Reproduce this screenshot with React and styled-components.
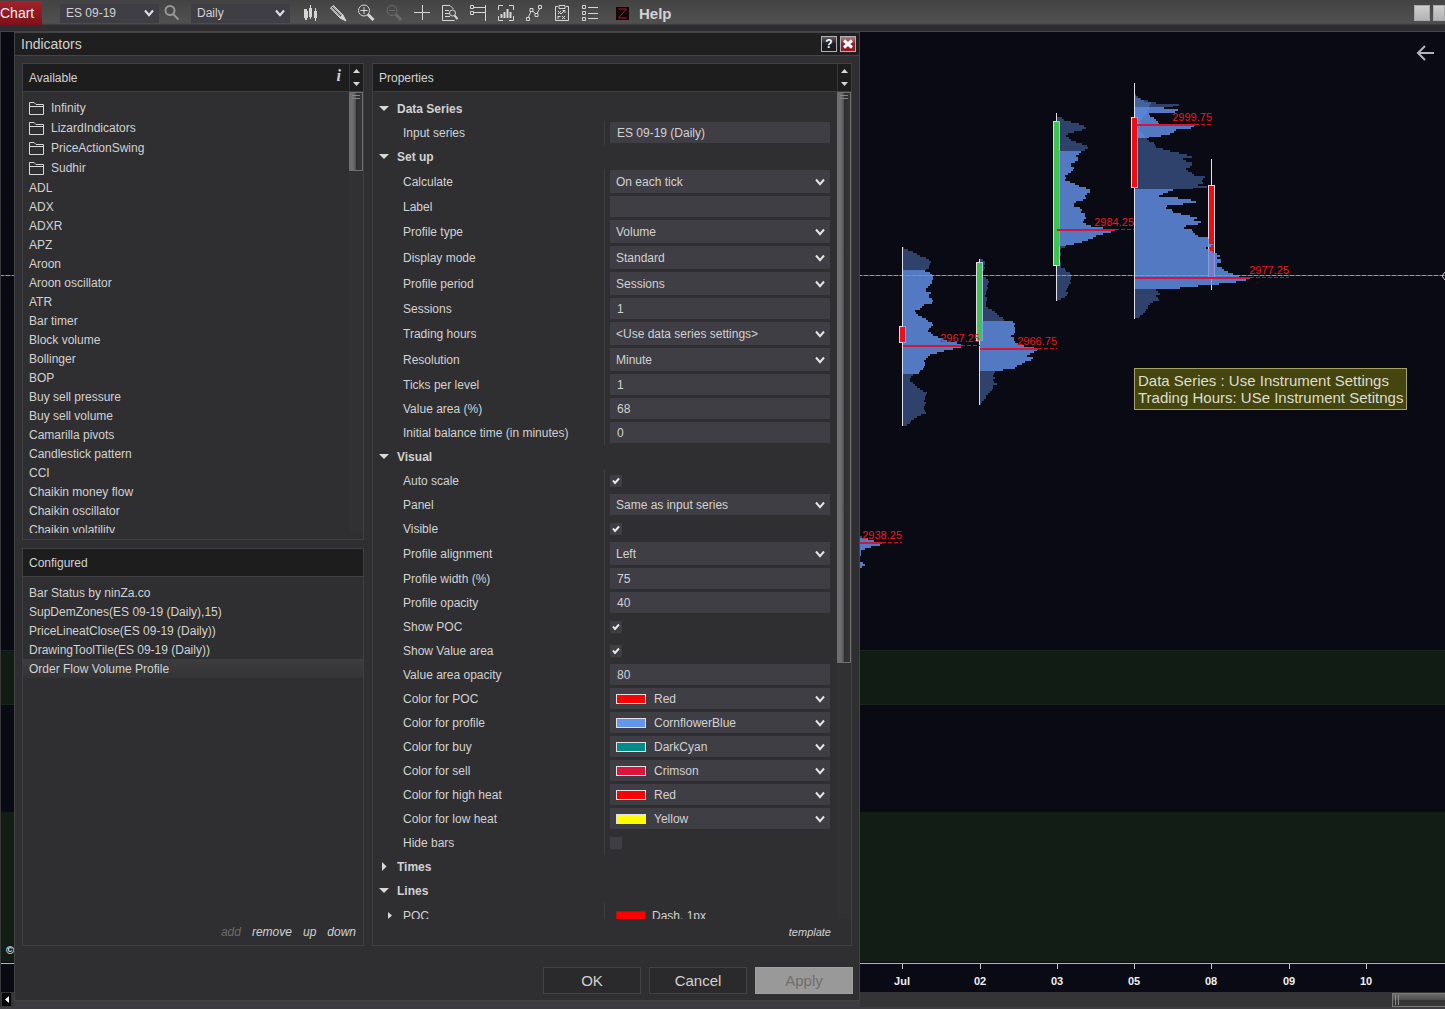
import React, { useId } from 'react'
import styled, { createGlobalStyle } from 'styled-components'

const indicators = [
  'ADL',
  'ADX',
  'ADXR',
  'APZ',
  'Aroon',
  'Aroon oscillator',
  'ATR',
  'Bar timer',
  'Block volume',
  'Bollinger',
  'BOP',
  'Buy sell pressure',
  'Buy sell volume',
  'Camarilla pivots',
  'Candlestick pattern',
  'CCI',
  'Chaikin money flow',
  'Chaikin oscillator',
  'Chaikin volatility',
]

const folders = ['Infinity', 'LizardIndicators', 'PriceActionSwing', 'Sudhir']

const configured = [
  'Bar Status by ninZa.co',
  'SupDemZones(ES 09-19 (Daily),15)',
  'PriceLineatClose(ES 09-19 (Daily))',
  'DrawingToolTile(ES 09-19 (Daily))',
  'Order Flow Volume Profile',
]

const groups = [
  {
    title: 'Data Series',
    open: true,
    rows: [{ type: 'text', label: 'Input series', value: 'ES 09-19 (Daily)' }],
  },
  {
    title: 'Set up',
    open: true,
    rows: [
      { type: 'select', label: 'Calculate', value: 'On each tick' },
      { type: 'text', label: 'Label', value: '' },
      { type: 'select', label: 'Profile type', value: 'Volume' },
      { type: 'select', label: 'Display mode', value: 'Standard' },
      { type: 'select', label: 'Profile period', value: 'Sessions' },
      { type: 'text', label: 'Sessions', value: '1' },
      {
        type: 'select',
        label: 'Trading hours',
        value: '<Use data series settings>',
      },
      { type: 'select', label: 'Resolution', value: 'Minute' },
      { type: 'text', label: 'Ticks per level', value: '1' },
      { type: 'text', label: 'Value area (%)', value: '68' },
      { type: 'text', label: 'Initial balance time (in minutes)', value: '0' },
    ],
  },
  {
    title: 'Visual',
    open: true,
    rows: [
      { type: 'check', label: 'Auto scale', value: true },
      { type: 'compact', label: 'Panel', value: 'Same as input series' },
      { type: 'check', label: 'Visible', value: true },
      { type: 'select', label: 'Profile alignment', value: 'Left' },
      { type: 'text', label: 'Profile width (%)', value: '75' },
      { type: 'text', label: 'Profile opacity', value: '40' },
      { type: 'check', label: 'Show POC', value: true },
      { type: 'check', label: 'Show Value area', value: true },
      { type: 'text', label: 'Value area opacity', value: '80' },
      { type: 'color', label: 'Color for POC', value: 'Red' },
      { type: 'color', label: 'Color for profile', value: 'CornflowerBlue' },
      { type: 'color', label: 'Color for buy', value: 'DarkCyan' },
      { type: 'color', label: 'Color for sell', value: 'Crimson' },
      { type: 'color', label: 'Color for high heat', value: 'Red' },
      { type: 'color', label: 'Color for low heat', value: 'Yellow' },
      { type: 'check', label: 'Hide bars', value: false },
    ],
  },
  { title: 'Times', open: false, rows: [] },
  {
    title: 'Lines',
    open: true,
    rows: [{ type: 'line', label: 'POC', value: 'Dash, 1px' }],
  },
]

// [y, width] anchors of each volume profile, va = value area from / to
const profiles = [
  {
    x: 825,
    va: [538, 575],
    points: [[536, 37], [538, 43], [540, 50], [542, 56], [544, 54], [546, 46], [548, 40], [551, 35], [560, 35], [564, 39], [567, 36], [570, 34]],
  },
  {
    x: 903,
    va: [270, 374],
    points: [[247, 0], [252, 12], [257, 22], [261, 28], [265, 27], [269, 22], [271, 23], [273, 28], [277, 31], [281, 29], [285, 25], [289, 23], [292, 27], [295, 25], [298, 29], [300, 31], [302, 28], [304, 20], [308, 17], [311, 11], [314, 14], [317, 22], [320, 26], [324, 29], [328, 26], [333, 27], [336, 35], [340, 45], [342, 53], [344, 57], [346, 58], [348, 50], [351, 38], [353, 27], [357, 24], [361, 21], [365, 21], [369, 20], [372, 15], [374, 9], [379, 7], [384, 11], [388, 17], [391, 23], [396, 22], [402, 22], [408, 21], [411, 24], [414, 17], [418, 11], [422, 6], [426, 0]],
  },
  {
    x: 980,
    va: [321, 371],
    points: [[259, 2], [261, 5], [264, 6], [268, 3], [275, 3], [280, 9], [284, 8], [290, 6], [300, 6], [307, 7], [310, 13], [314, 19], [318, 23], [320, 23], [321, 33], [323, 35], [328, 34], [332, 35], [335, 32], [340, 34], [343, 38], [346, 48], [348, 57], [350, 56], [352, 52], [355, 48], [358, 54], [360, 47], [363, 42], [367, 34], [369, 22], [371, 15], [376, 14], [380, 12], [383, 17], [386, 13], [389, 11], [392, 9], [397, 5], [401, 2], [405, 0]],
  },
  {
    x: 1057,
    va: [151, 246],
    points: [[117, 4], [120, 8], [122, 19], [125, 28], [128, 28], [131, 17], [134, 9], [138, 11], [142, 22], [145, 31], [148, 29], [151, 24], [155, 20], [160, 20], [163, 14], [168, 16], [172, 13], [176, 8], [179, 7], [183, 18], [187, 28], [190, 34], [194, 29], [198, 28], [201, 19], [204, 16], [208, 24], [211, 24], [214, 30], [218, 27], [222, 26], [225, 35], [228, 50], [230, 58], [232, 50], [235, 40], [238, 33], [242, 22], [244, 12], [246, 8], [248, 4], [253, 3], [260, 3], [266, 4], [268, 8], [272, 12], [277, 15], [282, 13], [287, 10], [292, 10], [296, 8], [298, 4], [301, 0]],
  },
  {
    x: 1135,
    va: [107, 139],
    points: [[94, 0], [98, 6], [100, 14], [102, 20], [104, 43], [106, 38], [107, 28], [109, 42], [111, 40], [113, 14], [116, 17], [120, 22], [123, 24], [125, 60], [127, 55], [129, 40], [132, 38], [134, 33], [136, 20], [138, 5]],
  },
  {
    x: 1135,
    va: [189, 289],
    points: [[96, 1], [102, 15], [108, 14], [116, 8], [124, 4], [132, 6], [138, 12], [142, 18], [146, 21], [149, 32], [152, 43], [155, 55], [157, 59], [158, 48], [162, 56], [165, 57], [168, 51], [171, 55], [175, 60], [176, 70], [179, 68], [182, 67], [184, 62], [186, 72], [188, 58], [189, 37], [193, 28], [195, 25], [197, 42], [199, 55], [201, 61], [203, 48], [205, 33], [207, 30], [209, 36], [211, 38], [214, 50], [216, 62], [219, 58], [221, 66], [223, 63], [225, 52], [227, 48], [229, 56], [232, 59], [235, 64], [237, 72], [241, 74], [244, 80], [247, 70], [250, 76], [253, 82], [254, 89], [257, 81], [260, 88], [263, 82], [266, 84], [270, 90], [273, 98], [276, 108], [278, 113], [280, 108], [282, 94], [284, 75], [286, 53], [288, 35], [289, 20], [293, 25], [296, 21], [299, 23], [302, 16], [305, 14], [308, 11], [312, 9], [316, 5], [318, 0]],
  },
]

const wicks = [
  { x: 902, from: 247, to: 426 },
  { x: 979, from: 259, to: 405 },
  { x: 1056, from: 113, to: 301 },
  { x: 1134, from: 83, to: 319 },
  { x: 1211, from: 159, to: 290 },
]

const candles = [
  { x: 899, from: 326, to: 342, color: '#e81123' },
  { x: 976, from: 262, to: 340, color: '#3fc350' },
  { x: 1053, from: 121, to: 265, color: '#3fc350' },
  { x: 1131, from: 117, to: 187, color: '#f00c12' },
  { x: 1208, from: 185, to: 277, color: '#f00c12' },
]

const pocs = [
  { value: '2938.25', from: 825, solid: 882, to: 902, y: 542, labelY: 539 },
  { value: '2967.25', from: 903, solid: 961, to: 980, y: 345, labelY: 342 },
  { value: '2966.75', from: 980, solid: 1038, to: 1057, y: 348, labelY: 345 },
  { value: '2984.25', from: 1057, solid: 1115, to: 1134, y: 229, labelY: 226 },
  { value: '2999.75', from: 1135, solid: 1195, to: 1212, y: 124, labelY: 121 },
  { value: '2977.25', from: 1135, solid: 1250, to: 1289, y: 277, labelY: 274 },
]

const days = [
  { x: 902, label: 'Jul' },
  { x: 980, label: '02' },
  { x: 1057, label: '03' },
  { x: 1134, label: '05' },
  { x: 1211, label: '08' },
  { x: 1289, label: '09' },
  { x: 1366, label: '10' },
]

const widthAt = (points, y) => {
  const next = points.findIndex(([py]) => py >= y)
  if (next === 0) return points[0][1]
  const [y0, w0] = points[next - 1]
  const [y1, w1] = points[next]
  return w0 + ((w1 - w0) * (y - y0)) / (y1 - y0)
}

const STEP = 2

const profilePath = ({ x, points }, from, to) => {
  const start = Math.max(from, points[0][0])
  const end = Math.min(to, points[points.length - 1][0])
  let d = `M${x} ${start}`
  for (let y = start; y < end; y += STEP) {
    const jitter = ((y * 7) % 5) / 2 - 1
    const w = Math.max(1, Math.round(widthAt(points, y) + jitter))
    d += `H${x + w}V${Math.min(y + STEP, end)}`
  }
  return `${d}H${x}Z`
}

const Chart = () => (
  <ChartSvg role="img" aria-label="ES 09-19 volume profile chart">
    <g transform="translate(0 -32)" shapeRendering="crispEdges">
      <rect y="650" width="100%" height="54" fill="#111c15" />
      <rect y="650" width="100%" height="1" fill="#17251b" />
      <rect y="704" width="100%" height="1" fill="#17251b" />
      <rect y="812" width="100%" height="150" fill="#121e15" />
      <rect y="963" width="100%" height="1" fill="#b4b4b8" />
      <rect y="275" width="100%" height="1" fill="#7a3386" />
      <line
        x1="0"
        x2="100%"
        y1="275.5"
        y2="275.5"
        stroke="#a98bb4"
        strokeDasharray="4 2"
      />
      {wicks.map(({ x, from, to }) => (
        <rect key={x} x={x} y={from} width="1" height={to - from} fill="#e2e2e6" />
      ))}
      {candles.map(({ x, from, to, color }) => (
        <rect
          key={x}
          x={x + 0.5}
          y={from + 0.5}
          width="6"
          height={to - from}
          fill={color}
          stroke="#dcdcdc"
        />
      ))}
      {profiles.map((profile, index) => (
        <g key={index} fill="#6495ed">
          <path d={profilePath(profile, 0, profile.va[0])} opacity="0.4" />
          <path
            d={profilePath(profile, profile.va[0], profile.va[1])}
            opacity="0.8"
          />
          <path d={profilePath(profile, profile.va[1], 999)} opacity="0.4" />
        </g>
      ))}
      {/* candle bodies stay readable left of their profile */}
      {candles.slice(0, 4).map(({ x, from, to, color }) => (
        <rect
          key={x}
          x={x + 1}
          y={from + 1}
          width="5"
          height={to - from - 1}
          fill={color}
        />
      ))}
      <rect x="1209" y="186" width="5" height="58" fill="#f00c12" />
      {pocs.map(({ value, from, solid, to, y }) => (
        <g key={value}>
          <rect x={from} y={y} width={solid - from} height="2" fill="#d0183a" />
          <line
            x1={solid}
            x2={to}
            y1={y + 0.5}
            y2={y + 0.5}
            stroke="#d01018"
            strokeDasharray="4 2"
          />
        </g>
      ))}
      {days.map(({ x }) => (
        <rect key={x} x={x} y="964" width="1" height="5" fill="#c8c8cc" />
      ))}
    </g>
    <g transform="translate(0 -32)">
      {pocs.map(({ value, to, labelY }) => (
        <PriceText key={value} x={to} y={labelY}>
          {value}
        </PriceText>
      ))}
      {days.map(({ x, label }) => (
        <DayText key={label} x={x} y="985">
          {label}
        </DayText>
      ))}
      <DayText x="10" y="954">
        ©
      </DayText>
    </g>
  </ChartSvg>
)

const Chevron = () => (
  <ChevronSvg viewBox="0 0 10 8" aria-hidden="true">
    <path d="M1 1.5 5 6.2 9 1.5" fill="none" stroke="#e4e4e4" strokeWidth="2" />
  </ChevronSvg>
)

const Triangle = ({ direction }) => {
  const shapes = {
    down: 'M0 2H10L5 7Z',
    right: 'M3 0V9L7.5 4.5Z',
    small: 'M3 1V8L7 4.5Z',
  }
  return (
    <svg width="10" height="9" viewBox="0 0 10 9" aria-hidden="true">
      <path d={shapes[direction]} fill="#d8d8d8" />
    </svg>
  )
}

const ScrollArrows = () => (
  <Arrows>
    <ArrowButton aria-label="Scroll up">
      <svg width="7" height="4" viewBox="0 0 7 4">
        <path d="M0 4 3.5 0 7 4Z" fill="#d8d8d8" />
      </svg>
    </ArrowButton>
    <ArrowButton aria-label="Scroll down">
      <svg width="7" height="4" viewBox="0 0 7 4">
        <path d="M0 0H7L3.5 4Z" fill="#d8d8d8" />
      </svg>
    </ArrowButton>
  </Arrows>
)

const toolIcons = [
  {
    name: 'Bars',
    draw: (
      <path
        d="M3 5H6V7H7V14H6V16H4V14H3ZM8 4H9V1H10V4H11V13H10V15H9V13H8ZM13 7H14V4H15V7H16V14H15V17H14V14H13Z"
        fill="#d6d6d6"
        stroke="none"
      />
    ),
  },
  {
    name: 'Draw',
    draw: (
      <>
        <path d="M1.5 4 4.5 1.500 14 11 11 14Z" fill="#a9a9a9" />
        <path d="M3 3 12.500 12.500" stroke="#4c4c4c" />
        <path d="M11 14 17 17 14 11Z" fill="#d6d6d6" />
      </>
    ),
  },
  {
    name: 'Zoom in',
    draw: (
      <>
        <circle cx="7" cy="6.5" r="5.5" />
        <path d="M3.5 6.5H10.500M7 3V10" />
        <path d="M11 10.500 16.500 16" strokeWidth="3" />
      </>
    ),
  },
  {
    name: 'Zoom out',
    dim: true,
    draw: (
      <>
        <circle cx="7" cy="6.5" r="5" />
        <path d="M4 6.5H10" />
        <path d="M11 10.500 16 16" strokeWidth="3" />
      </>
    ),
  },
  { name: 'Crosshair', draw: <path d="M1 8.5H17M9.500 1V16" /> },
  {
    name: 'Data box',
    draw: (
      <>
        <path d="M13.5 16.500H1.500V1.500H9L12.500 5M4 6.500H8M4 9.500H8M4 12.500H9" />
        <circle cx="11.500" cy="9" r="3" />
        <path d="M13.500 11.500 16.500 15" strokeWidth="2" />
      </>
    ),
  },
  {
    name: 'Panels',
    draw: (
      <path d="M1.500 1.500H4.500V4.500H1.500ZM1.500 7.500H4.500V10.500H1.500ZM4.500 3.500H16.500M4.500 8.500H16.500M16.500 1V17" />
    ),
  },
  {
    name: 'Chart',
    draw: (
      <>
        <path d="M6 1.500H1.500V6M12 1.500H16.500V6M6 16.500H1.500V12M12 16.500H16.500V12" />
        <path d="M4.500 10V14M7.500 8V14M10.500 5V14M13.500 8V14" strokeWidth="2" />
      </>
    ),
  },
  {
    name: 'Polyline',
    draw: (
      <>
        <path d="M3.500 13 6 7.500M7.500 7 11 10M12 9.500 15 4" />
        <path d="M1.500 13.500H4.500V16.500H1.500ZM5 4.500H8V7.500H5ZM10 9.500H13V12.500H10ZM13.500 1.500H16.500V4.500H13.500Z" />
      </>
    ),
  },
  {
    name: 'Strategies',
    draw: (
      <>
        <path d="M5 2.500H2.500V16.500H15.500V2.500H13M6 1.500H12V4.500H6Z" />
        <path d="M5 7 8 10M8 7 5 10M8 10 12 6M9.500 6.500H12V9M5 12V15M5 12.500H7.500M9 12 12 15M12 12 9 15" />
      </>
    ),
  },
  {
    name: 'Properties',
    draw: (
      <path d="M1.500 1.500H4.500V4.500H1.500ZM1.500 7.500H4.500V10.500H1.500ZM1.500 13.500H4.500V16.500H1.500ZM7 3.500H17M7 9.500H17M7 14.500H17" />
    ),
  },
]

const Toolbar = () => (
  <Bar>
    <ChartTab>Chart</ChartTab>
    <BarSelect>
      <Select aria-label="Instrument" $inset={6}>
        <option>ES 09-19</option>
      </Select>
      <Chevron />
    </BarSelect>
    <SearchButton aria-label="Search">
      <svg width="18" height="18" viewBox="0 0 18 18" fill="none" stroke="#969696">
        <circle cx="7" cy="6.500" r="4.500" strokeWidth="2" />
        <path d="M10 10 15.500 15.500" strokeWidth="2" />
      </svg>
    </SearchButton>
    <BarSelect>
      <Select aria-label="Interval" $inset={6}>
        <option>Daily</option>
      </Select>
      <Chevron />
    </BarSelect>
    <Tools>
      {toolIcons.map(({ name, draw, dim }) => (
        <ToolButton key={name} aria-label={name}>
          <svg
            width="18"
            height="18"
            viewBox="0 0 18 18"
            fill="none"
            stroke={dim ? '#6b6b6b' : '#d6d6d6'}
          >
            {draw}
          </svg>
        </ToolButton>
      ))}
    </Tools>
    <HelpButton>
      <svg width="13" height="13" viewBox="0 0 13 13" aria-hidden="true">
        <rect width="13" height="13" fill="#140608" />
        <path d="M2.500 2H10.500L2.500 11H10.500" fill="none" stroke="#b8122a" />
      </svg>
      Help
    </HelpButton>
    <WindowButtons>
      <WindowButton aria-label="Minimize" $width={16} />
      <WindowButton aria-label="Maximize" $width={12} />
    </WindowButtons>
  </Bar>
)

const PropertyField = ({ id, type, value }) => {
  if (type === 'text') return <TextInput id={id} defaultValue={value} />
  if (type === 'check') {
    return (
      <CheckWrapper>
        <CheckInput id={id} type="checkbox" defaultChecked={value} />
        <svg width="8" height="8" viewBox="0 0 8 8" aria-hidden="true">
          <path d="M1 3.500 3 6 7 1.500" fill="none" stroke="#ececec" strokeWidth="2" />
        </svg>
      </CheckWrapper>
    )
  }
  if (type === 'line') {
    return (
      <LineValue id={id}>
        <Swatch $color="Red" $plain />
        {value}
      </LineValue>
    )
  }
  return (
    <SelectWrapper>
      {type === 'color' && (
        <SwatchHolder>
          <Swatch $color={value} />
        </SwatchHolder>
      )}
      <Select id={id} $inset={type === 'color' ? 44 : 6}>
        <option>{value}</option>
      </Select>
      <Chevron />
    </SelectWrapper>
  )
}

const PropertyRow = ({ type, label, value }) => {
  const id = useId()
  const tall = type === 'select' || type === 'line'
  return (
    <Row $tall={tall}>
      <LabelCell>
        {type === 'line' && <Triangle direction="small" />}
        <label htmlFor={type === 'line' ? undefined : id}>{label}</label>
      </LabelCell>
      <FieldCell>
        <PropertyField id={id} type={type} value={value} />
      </FieldCell>
    </Row>
  )
}

const IndicatorsDialog = () => (
  <Dialog role="dialog" aria-labelledby="dialog-title">
    <TitleBar>
      <Title id="dialog-title">Indicators</Title>
      <TitleButton aria-label="Help">?</TitleButton>
      <TitleButton aria-label="Close" $close>
        <svg width="10" height="10" viewBox="0 0 10 10">
          <path d="M1 1.500 9 8.500M9 1.500 1 8.500" stroke="#fff" strokeWidth="3" />
        </svg>
      </TitleButton>
    </TitleBar>
    <Body>
      <LeftColumn>
        <Panel $grow={477}>
          <PanelHeader>
            <PanelTitle>Available</PanelTitle>
            <InfoButton aria-label="Info">i</InfoButton>
            <ScrollArrows />
          </PanelHeader>
          <Scroller>
            <List>
              {folders.map(name => (
                <FolderItem key={name}>
                  <svg width="15" height="13" viewBox="0 0 15 13" fill="none" stroke="#d8d8d8">
                    <path d="M.5 12.500V.5H5L7 2.500H14.500V12.500ZM.5 4.500H14.500" />
                  </svg>
                  {name}
                </FolderItem>
              ))}
              {indicators.map(name => (
                <ListItem key={name}>{name}</ListItem>
              ))}
            </List>
            <Track>
              <Thumb $size="18%" />
            </Track>
          </Scroller>
        </Panel>
        <Panel $grow={398}>
          <PanelHeader>
            <PanelTitle>Configured</PanelTitle>
          </PanelHeader>
          <List>
            {configured.map(name => (
              <ListItem
                key={name}
                $selected={name === 'Order Flow Volume Profile'}
              >
                {name}
              </ListItem>
            ))}
          </List>
          <Actions>
            <TextButton disabled>add</TextButton>
            <TextButton>remove</TextButton>
            <TextButton>up</TextButton>
            <TextButton>down</TextButton>
          </Actions>
        </Panel>
      </LeftColumn>
      <Panel $grow={1}>
        <PanelHeader>
          <PanelTitle>Properties</PanelTitle>
          <ScrollArrows />
        </PanelHeader>
        <Scroller>
          <Properties>
            {groups.map(({ title, open, rows }) => (
              <section key={title}>
                <GroupHeader>
                  <GroupButton aria-expanded={open}>
                    <Triangle direction={open ? 'down' : 'right'} />
                    {title}
                  </GroupButton>
                </GroupHeader>
                {rows.map(row => (
                  <PropertyRow key={row.label} {...row} />
                ))}
              </section>
            ))}
          </Properties>
          <Track>
            <Thumb $size="69%" />
          </Track>
        </Scroller>
        <TemplateBar>
          <TextButton $small>template</TextButton>
        </TemplateBar>
      </Panel>
    </Body>
    <Footer>
      <DialogButton>OK</DialogButton>
      <DialogButton>Cancel</DialogButton>
      <DialogButton disabled>Apply</DialogButton>
    </Footer>
  </Dialog>
)

const App = () => (
  <Page>
    <GlobalStyle />
    <Toolbar />
    <Workspace>
      <ChartArea>
        <Chart />
        <BackButton aria-label="Back">
          <svg width="18" height="16" viewBox="0 0 18 16" fill="none" stroke="#b4b4b8" strokeWidth="2">
            <path d="M18 8H2M9 1 2 8 9 15" />
          </svg>
        </BackButton>
        <PriceMarker width="3" height="8" viewBox="0 0 3 8">
          <path d="M3 0 0 4 3 8" fill="none" stroke="#d0c8d4" />
        </PriceMarker>
        <Note>
          Data Series : Use Instrument Settings
          <br />
          Trading Hours: USe Instrument Setitngs
        </Note>
      </ChartArea>
      <TimeScroll>
        <TimeScrollButton aria-label="Scroll left">
          <svg width="4" height="7" viewBox="0 0 4 7">
            <path d="M4 0V7L0 3.500Z" fill="#fff" />
          </svg>
        </TimeScrollButton>
        <TimeThumb />
      </TimeScroll>
      <IndicatorsDialog />
    </Workspace>
  </Page>
)

export default App

const GlobalStyle = createGlobalStyle`
  * {
    box-sizing: border-box;
  }
  body {
    margin: 0;
    background: #2f2f31;
    color: #d2d2d2;
    font-family: 'Liberation Sans', Arial, sans-serif;
    font-size: 12px;
  }
  button,
  input,
  select {
    margin: 0;
    padding: 0;
    border: 0;
    border-radius: 0;
    background: none;
    color: inherit;
    font: inherit;
  }
  svg {
    display: block;
    flex: none;
  }
`

const Page = styled.div`
  display: flex;
  flex-direction: column;
  height: 100vh;
  min-height: 600px;
  overflow: hidden;
`

const Bar = styled.header`
  display: flex;
  align-items: center;
  flex: none;
  height: 32px;
  padding: 1px 0 6px;
  border-bottom: 1px solid #444446;
  background: linear-gradient(#434343, #505050 22px, #4b4b4b 24px, #2e2e30 25px);
`

const ChartTab = styled.button`
  align-self: stretch;
  width: 42px;
  margin-right: 18px;
  background: linear-gradient(#a3222c, #7f1119);
  color: #f2f2f2;
  font-size: 14px;
  text-align: left;
`

const SelectWrapper = styled.div`
  position: relative;
  flex: 1;
  align-self: stretch;
  background: #3f3e45;
`

const BarSelect = styled(SelectWrapper)`
  flex: none;
  align-self: center;
  width: 99px;
  height: 19px;
`

const Select = styled.select`
  appearance: none;
  display: block;
  width: 100%;
  height: 100%;
  padding-left: ${({ $inset }) => $inset}px;
  outline: none;

  option {
    background: #3f3e45;
  }
`

const ChevronSvg = styled.svg`
  position: absolute;
  top: 50%;
  right: 5px;
  width: 10px;
  height: 8px;
  margin-top: -4px;
  pointer-events: none;
`

const SearchButton = styled.button`
  margin: 0 10px 0 4px;
`

const Tools = styled.nav`
  display: flex;
  gap: 10px;
  margin-left: 11px;
`

const ToolButton = styled.button`
  width: 18px;
  height: 18px;
`

const HelpButton = styled.button`
  display: flex;
  align-items: center;
  gap: 10px;
  margin-left: 17px;
  font-size: 15px;
  font-weight: bold;
`

const WindowButtons = styled.div`
  display: flex;
  gap: 3px;
  margin-left: auto;
`

const WindowButton = styled.button`
  width: ${({ $width }) => $width}px;
  height: 16px;
  border: 1px solid #a9a9a9;
  background: linear-gradient(#cfcfcf, #b3b1b4);
`

const Workspace = styled.main`
  position: relative;
  display: flex;
  flex: 1;
  flex-direction: column;
  min-height: 0;
`

const ChartArea = styled.div`
  position: relative;
  flex: 1;
  min-height: 0;
  overflow: hidden;
  border-left: 1px solid #3a3a3c;
  background: #0a0a14;
`

const ChartSvg = styled.svg`
  width: calc(100% + 1px);
  height: 100%;
  margin-left: -1px;
`

const PriceText = styled.text`
  fill: #f0141c;
  font-size: 11px;
  text-anchor: end;
`

const DayText = styled.text`
  fill: #f0f0f0;
  font-size: 11px;
  font-weight: bold;
  text-anchor: middle;
`

const BackButton = styled.button`
  position: absolute;
  top: 13px;
  right: 11px;
`

const PriceMarker = styled.svg`
  position: absolute;
  top: 240px;
  right: 0;
`

const Note = styled.p`
  position: absolute;
  top: 336px;
  left: 1133px;
  margin: 0;
  padding: 3px;
  border: 1px solid #a3a368;
  background: #45450f;
  color: #deded0;
  font-size: 15px;
  line-height: 17px;
  white-space: nowrap;
`

const TimeScroll = styled.div`
  display: flex;
  align-items: center;
  justify-content: space-between;
  flex: none;
  height: 17px;
  padding-left: 2px;
  border-bottom: 2px solid #3f3d42;
  background: #343436;
`

const TimeScrollButton = styled.button`
  display: grid;
  place-items: center;
  width: 9px;
  height: 13px;
  background: #000;
`

const TimeThumb = styled.div`
  width: 53px;
  height: 14px;
  border: 1px solid #7a7a7a;
  border-right: 0;
  background:
    repeating-linear-gradient(90deg, #8a8a8a 0 1px, transparent 1px 3px) 2px 1px /
      6px 10px no-repeat,
    linear-gradient(#6a6a6a, #4c4c4c 50%, #363636 50%);
`

const Dialog = styled.section`
  position: absolute;
  top: 0;
  bottom: 8px;
  left: 14px;
  display: flex;
  flex-direction: column;
  width: 846px;
  max-width: calc(100% - 14px);
  border: 1px solid #444446;
  background: #2f2f31;
  box-shadow: 0 8px 0 #3c3b40;
`

const TitleBar = styled.header`
  display: flex;
  align-items: center;
  flex: none;
  gap: 3px;
  height: 23px;
  padding: 0 3px 0 6px;
  border-bottom: 1px solid #444446;
  background: #1f1f20;
`

const Title = styled.h1`
  flex: 1;
  margin: 0;
  font-size: 14px;
  font-weight: normal;
`

const TitleButton = styled.button`
  display: grid;
  place-items: center;
  width: 16px;
  height: 16px;
  border: 1px solid #b0b0b4;
  background: ${({ $close }) =>
    $close
      ? 'linear-gradient(#b08080, #8f1c26 50%)'
      : 'linear-gradient(#5c5c62, #1b1b20 50%)'};
  color: #fff;
  font-weight: bold;
  line-height: 14px;
`

const Body = styled.div`
  display: grid;
  grid-template-columns: 342px minmax(0, 1fr);
  flex: 1;
  gap: 8px;
  min-height: 0;
  padding: 7px 7px 0;
`

const LeftColumn = styled.div`
  display: flex;
  flex-direction: column;
  gap: 8px;
  min-height: 0;
`

const Panel = styled.section`
  display: flex;
  flex: ${({ $grow }) => $grow} 1 0;
  flex-direction: column;
  min-height: 0;
  border: 1px solid #404043;
`

const PanelHeader = styled.header`
  display: flex;
  align-items: stretch;
  flex: none;
  height: 28px;
  padding-left: 6px;
  border-bottom: 1px solid #404043;
  background: #1d1d1e;
  line-height: 28px;
`

const PanelTitle = styled.h2`
  flex: 1;
  margin: 0;
  font-size: 12px;
  font-weight: normal;
`

const InfoButton = styled.button`
  margin-right: 8px;
  padding-bottom: 4px;
  font: italic bold 16px 'Liberation Serif', serif;
`

const Arrows = styled.div`
  display: flex;
  flex-direction: column;
  width: 14px;
  border-left: 1px solid #38383b;
`

const ArrowButton = styled.button`
  display: grid;
  flex: 1;
  place-items: center;
`

const Scroller = styled.div`
  display: flex;
  flex: 1;
  min-height: 0;
`

const Track = styled.div`
  width: 14px;
  margin-bottom: 6px;
  background: #313133;
`

const Thumb = styled.div`
  height: ${({ $size }) => $size};
  border: 1px solid #6e6e70;
  background:
    repeating-linear-gradient(#858587 0 1px, transparent 1px 3px) center 2px / 8px
      5px no-repeat,
    linear-gradient(90deg, #6e6e70 3px, #4c4c4e 6px, #2f2f31 6px, #363638);
`

const List = styled.ul`
  flex: 1;
  min-height: 0;
  margin: 0 0 6px;
  padding: 6px 0 0;
  overflow: hidden;
  list-style: none;
`

const ListItem = styled.li`
  height: 19px;
  padding-left: 6px;
  background: ${({ $selected }) =>
    $selected ? 'linear-gradient(#3d3d40, #343436)' : 'none'};
  line-height: 20px;
`

const FolderItem = styled(ListItem)`
  display: flex;
  align-items: center;
  gap: 7px;
  height: 20px;
`

const Actions = styled.div`
  display: flex;
  justify-content: flex-end;
  gap: 11px;
  padding: 0 7px 6px;
`

const TextButton = styled.button`
  font-size: ${({ $small }) => ($small ? 11 : 12)}px;
  font-style: italic;

  &:disabled {
    color: #6a6a6c;
  }
`

const Properties = styled.div`
  flex: 1;
  min-width: 0;
  margin: 0 7px 6px 0;
  padding-top: 5px;
  overflow: hidden;
`

const GroupHeader = styled.h3`
  height: 24px;
  margin: 0;
  padding: 1px 0 2px 6px;
  font-size: 12px;
`

const GroupButton = styled.button`
  display: flex;
  align-items: center;
  gap: 8px;
  height: 100%;
`

const Row = styled.div`
  display: flex;
  height: ${({ $tall }) => ($tall ? 26 : 24)}px;
`

const LabelCell = styled.div`
  position: relative;
  display: flex;
  align-items: center;
  width: 232px;
  padding: 0 0 1px 30px;
  border-right: 1px solid #3e3e41;

  svg {
    position: absolute;
    left: 12px;
  }
`

const FieldCell = styled.div`
  display: flex;
  align-items: center;
  flex: 1;
  min-width: 0;
  padding: 1px 0 2px 5px;
`

const TextInput = styled.input`
  flex: 1;
  align-self: stretch;
  min-width: 0;
  padding-left: 7px;
  background: #3f3e45;
  outline: none;
`

const CheckWrapper = styled.span`
  position: relative;
  display: flex;

  svg {
    position: absolute;
    top: 2px;
    left: 2px;
    pointer-events: none;
  }
  input:not(:checked) + svg {
    display: none;
  }
`

const CheckInput = styled.input`
  appearance: none;
  width: 12px;
  height: 12px;
  background: #3f3e45;
`

const SwatchHolder = styled.span`
  position: absolute;
  top: 0;
  bottom: 0;
  left: 6px;
  display: flex;
  align-items: center;
  pointer-events: none;
`

const Swatch = styled.span`
  width: 30px;
  height: 10px;
  border: 1px solid ${({ $plain }) => ($plain ? '#a01818' : '#e0e0e0')};
  background: ${({ $color }) => $color};
`

const LineValue = styled.span`
  display: flex;
  align-items: center;
  gap: 6px;
  padding-left: 6px;
`

const TemplateBar = styled.div`
  display: flex;
  justify-content: flex-end;
  height: 20px;
  padding: 0 20px 6px 0;
`

const Footer = styled.footer`
  display: flex;
  justify-content: flex-end;
  gap: 8px;
  margin-top: 21px;
  padding: 0 6px 6px;
`

const DialogButton = styled.button`
  width: 98px;
  height: 27px;
  border: 1px solid #424245;
  background: #2a2a2c;
  font-size: 15px;

  &:disabled {
    border-color: #a0a0a0;
    background: #999;
    color: #6e6e6e;
  }
`
